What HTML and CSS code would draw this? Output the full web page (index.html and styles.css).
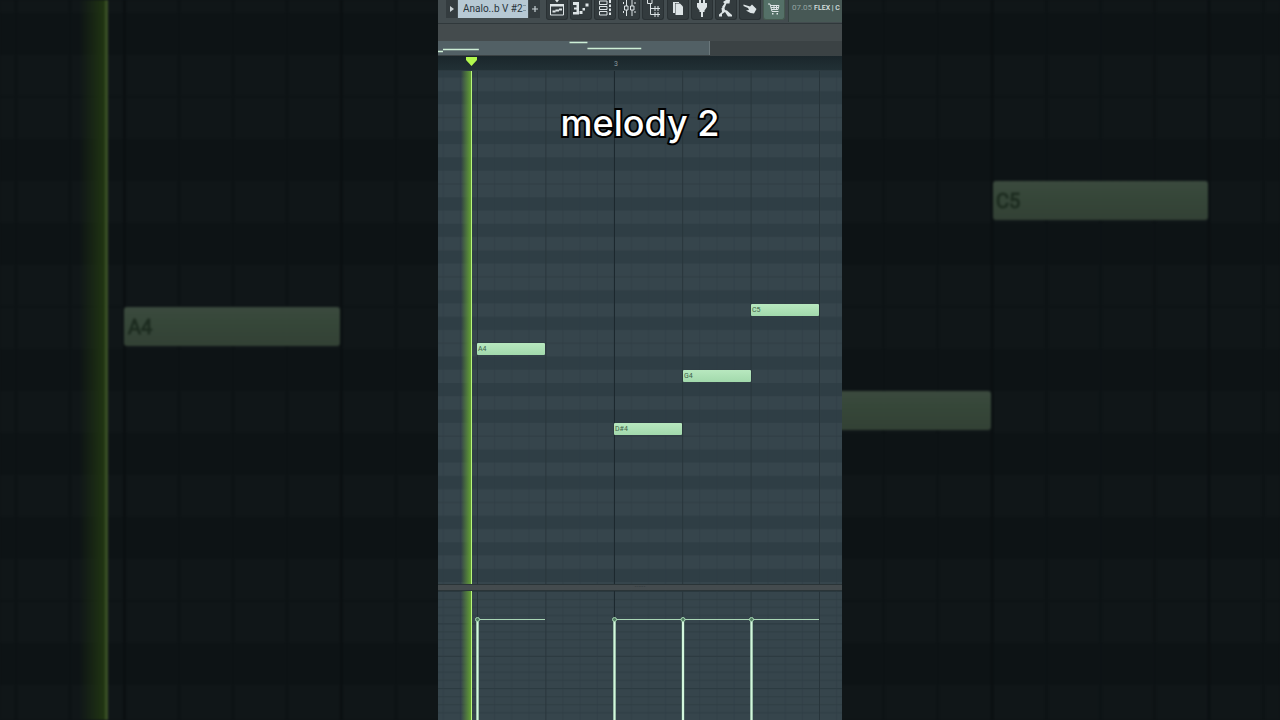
FILE: index.html
```html
<!DOCTYPE html>
<html lang="en">
<head>
    <meta charset="UTF-8">
    <meta name="viewport" content="width=device-width, initial-scale=1.0">
    <title>Piano roll</title>
    <link rel="stylesheet" href="styles.css">
</head>
<body>
    <!-- Dimmed, enlarged copy of the roll behind the video -->
    <svg class="backdrop" viewBox="0 0 1280 720" preserveAspectRatio="xMidYMid slice" aria-hidden="true">
        <defs>
            <pattern id="bg-rows" y="180.7" width="1280" height="504" patternUnits="userSpaceOnUse">
                <rect width="1280" height="504" fill="#101618"/>
                <path d="M0 63H1280M0 189H1280M0 273H1280M0 357H1280M0 483H1280" stroke="#0d1315" stroke-width="42"/>
                <path d="M0 126H1280M0 420H1280" stroke="#0d1315" stroke-width="2"/>
            </pattern>
            <pattern id="bg-cols" x="123" width="216.9" height="720" patternUnits="userSpaceOnUse">
                <path d="M1.5 0V720" stroke="#0a0f11" stroke-width="3"/>
                <path d="M56 0V720M110 0V720M164 0V720" stroke="#0c1214" stroke-width="3"/>
            </pattern>
            <linearGradient id="bg-glow">
                <stop offset="0" stop-color="#1f3312" stop-opacity="0"/>
                <stop offset="1" stop-color="#213612"/>
            </linearGradient>
            <linearGradient id="bg-note" x2="0" y2="1">
                <stop offset="0" stop-color="#3b4a3e"/>
                <stop offset="0.4" stop-color="#364739"/>
                <stop offset="1" stop-color="#334135"/>
            </linearGradient>
        </defs>
        <rect width="1280" height="720" fill="url(#bg-rows)"/>
        <rect width="1280" height="720" fill="url(#bg-cols)"/>
        <rect x="79" width="26" height="720" fill="url(#bg-glow)"/>
        <rect x="105" width="3" height="720" fill="#3a5026"/>
        <g fill="url(#bg-note)">
            <rect x="124" y="307" width="216" height="39" rx="3"/>
            <rect x="776" y="391" width="215" height="39" rx="3"/>
            <rect x="993" y="181" width="215" height="39" rx="3"/>
        </g>
        <text x="128" y="334">A4</text>
        <text x="996" y="208">C5</text>
    </svg>

    <main class="player">
        <header class="toolbar">
            <div class="pattern-picker">
                <button class="step" type="button" aria-label="Pattern menu">
                    <svg width="4" height="6" viewBox="0 0 4 6"><path d="M0 0L4 3L0 6Z"/></svg>
                </button>
                <select aria-label="Pattern">
                    <option>Analo..b V #2</option>
                </select>
                <button class="step" type="button" aria-label="Add pattern">
                    <svg width="6" height="6" viewBox="0 0 6 6"><path d="M2.4 0H3.6V2.4H6V3.6H3.6V6H2.4V3.6H0V2.4H2.4Z"/></svg>
                </button>
            </div>

            <nav class="tools">
                <button type="button" aria-label="Playlist">
                    <svg viewBox="0 0 22 20"><path class="line" d="M4.5 4.5H17.5V15H4.5Z"/><path d="M4 4H18V6.500H4ZM9 0H13L11 2.500ZM6.500 10.500H9.500V12.500H6.500ZM9.500 9.500H13V11.500H9.500ZM13 8.500H16V10.500H13Z"/></svg>
                </button>
                <button type="button" aria-label="Piano roll">
                    <svg viewBox="0 0 22 20"><path d="M3 2H9V14.500H3V12H6.500V9.500H4V7.500H6.500V5H3ZM9.500 11H12.500V14H9.500ZM12.500 8H15V10.500H12.500ZM15.500 3.500H18.500V6.500H15.500Z"/></svg>
                </button>
                <button type="button" aria-label="Channel rack">
                    <svg viewBox="0 0 22 20"><path class="line" d="M5.500 1H13V4.500H5.500ZM5.500 6.500H13V9.500H5.500ZM5.500 11.500H13V15H5.500Z"/><path d="M15 0H17V3H15ZM15 4.500H17V7H15ZM15 8.500H17V11H15ZM15 12.500H17V15H15Z"/></svg>
                </button>
                <button type="button" aria-label="Mixer">
                    <svg viewBox="0 0 22 20"><path class="line" d="M8.500 0V6M8.500 10V16M14 0V6M14 10V16M6.500 6H10V10H6.500ZM12.500 6H16V10H12.500Z"/><path d="M5 2H6V4H5ZM5 11H6V13H5ZM16.500 2H17.500V4H16.500ZM16.500 11H17.500V13H16.500Z"/></svg>
                </button>
                <button type="button" aria-label="Browser">
                    <svg viewBox="0 0 22 20"><path class="line" d="M5.500 0V3.500H10V0M8.500 4V14.500H12M8.500 8.500H12M13 6V11M13 12V17M12 8.500H18M12 14.500H18M16 6V11M16 12V17"/></svg>
                </button>
                <button type="button" aria-label="New">
                    <svg viewBox="0 0 22 20"><path d="M6 2H12V3H8V13H6Z"/><path d="M8.500 3.500H13L16 6.500V15H8.500Z"/></svg>
                </button>
                <button type="button" aria-label="Plugins">
                    <svg viewBox="0 0 22 20"><path d="M8 0H10V3H12V0H14V3H16V7L13.500 10.500V12H12V17H10V12H8.500V10.500L6 7V3H8Z"/></svg>
                </button>
                <button type="button" aria-label="Tools">
                    <svg viewBox="0 0 22 20"><path d="M8 2L11 0H15L14.500 3.500L11.500 3.500L9.500 8L8 9L7 7L9.500 3.500ZM6.500 8H9.500L10 10L12 10.500L17 15V16.500H13L10 12L7 14V16.500H4V14.500L7 12Z"/></svg>
                </button>
                <button type="button" aria-label="Touch">
                    <svg viewBox="0 0 22 20"><path d="M4.500 4.500L11 6.500L13 4.500L17.500 9L15 13.500L11.500 13L7 10.500L10 10L9 8L4.500 6Z"/></svg>
                </button>
                <button class="shop" type="button" aria-label="Shop">
                    <svg viewBox="0 0 22 20"><path class="line" d="M5 4H7L9 11.500H15.500M7.500 5.500H16L15 9.500H8.500M8 7.500H15.500M11 5V10M13.500 5V10"/><path d="M9 13H10.500V14.500H9ZM13.500 13H15V14.500H13.500Z"/></svg>
                </button>
            </nav>

            <p class="news">07.05 <b>FLEX | C</b></p>
        </header>

        <div class="spacer"></div>

        <div class="overview">
            <svg class="overview-window" viewBox="0 0 272 14">
                <path d="M0 10.500H5M5 8.500H41M132 1.500H150M150 7.500H204"/>
            </svg>
        </div>

        <div class="ruler">
            <svg class="marker" width="11" height="9" viewBox="0 0 11 9"><path d="M0 0H11V3L5.500 9L0 3Z"/></svg>
            <span class="bar-number">3</span>
        </div>

        <section class="roll">
            <svg class="grid" aria-hidden="true">
                <defs>
                    <pattern id="rows" y="232.4" width="1000" height="159.240" patternUnits="userSpaceOnUse">
                        <rect width="1000" height="160" fill="#36454c"/>
                        <path d="M0 19.900H1000M0 59.700H1000M0 86.250H1000M0 112.800H1000M0 152.600H1000" stroke="#2f3e45" stroke-width="13.270"/>
                        <path d="M0 39.800H1000M0 132.700H1000" stroke="#2f3d43"/>
                    </pattern>
                    <pattern id="cols" x="39" width="68.400" height="1000" patternUnits="userSpaceOnUse">
                        <path d="M0.500 0V1000" stroke="#28353b"/>
                        <path d="M17.600 0V1000M34.700 0V1000M51.800 0V1000" stroke="#2c3a41" stroke-opacity="0.500"/>
                    </pattern>
                </defs>
                <rect width="100%" height="100%" fill="url(#rows)"/>
                <rect width="100%" height="100%" fill="url(#cols)"/>
                <path d="M176.500 0V1000" stroke="#1c282e"/>
            </svg>
            <div class="playhead"></div>
            <div class="note a4">A4</div>
            <div class="note ds4">D#4</div>
            <div class="note g4">G4</div>
            <div class="note c5">C5</div>
            <h1 class="caption">melody 2</h1>
        </section>

        <div class="splitter"><span>······</span></div>

        <section class="velocity">
            <svg class="grid" aria-hidden="true">
                <defs>
                    <pattern id="levels" width="1000" height="32.400" patternUnits="userSpaceOnUse">
                        <path d="M0 0.500H1000" stroke="#2a383e"/>
                        <path d="M0 8.500H1000M0 16.500H1000M0 24.500H1000" stroke="#2d3b41" stroke-opacity="0.800"/>
                    </pattern>
                </defs>
                <rect width="100%" height="100%" fill="#36454c"/>
                <rect width="100%" height="100%" fill="url(#levels)"/>
                <rect width="100%" height="100%" fill="url(#cols)"/>
                <path d="M176.500 0V1000" stroke="#1c282e"/>
                <path class="level" d="M39 28.500H107M176 28.500H381"/>
                <path class="stem-edge" d="M39.500 29V1000M176.500 29V1000M245 29V1000M313.500 29V1000"/>
                <path class="stem" d="M39.500 29V1000M176.500 29V1000M245 29V1000M313.500 29V1000"/>
                <g class="handles">
                    <circle cx="39.500" cy="28.500" r="2"/>
                    <circle cx="176.500" cy="28.500" r="2"/>
                    <circle cx="245" cy="28.500" r="2"/>
                    <circle cx="313.500" cy="28.500" r="2"/>
                </g>
            </svg>
            <div class="playhead"></div>
        </section>
    </main>
</body>
</html>
```
FILE: styles.css
```css
* {
    box-sizing: border-box;
}

body {
    margin: 0;
    height: 100vh;
    display: flex;
    justify-content: center;
    overflow: hidden;
    background: #0e1416;
    font-family: Roboto, sans-serif;
}

button {
    padding: 0;
    border: none;
    display: flex;
    align-items: center;
    justify-content: center;
}

.backdrop {
    position: absolute;
    width: 100%;
    height: 100%;
    filter: blur(1px);
}

.backdrop text {
    font-size: 20px;
    fill: #1d2c20;
    stroke: #1d2c20;
}

/* Portrait video in the middle */
.player {
    position: relative;
    height: 100%;
    aspect-ratio: 101 / 180;
    display: flex;
    flex-direction: column;
    background: #36454c;
}

/* Toolbar */
.toolbar {
    height: 24px;
    display: flex;
    align-items: flex-start;
    padding-left: 8px;
    background: #434c4f;
    border-bottom: 1px solid #30383b;
}

.pattern-picker {
    display: flex;
    gap: 1px;
    height: 18px;
}

.step {
    width: 11px;
    background: #343c3f;
}

.step svg {
    fill: #c9d2d5;
}

.pattern-picker select {
    appearance: none;
    width: 70px;
    padding: 0 0 2px 5px;
    border: none;
    border-radius: 0;
    /* up / down marks at the right edge */
    background:
        linear-gradient(#8297a2, #8297a2) right 2px top 5px / 3px 1px no-repeat,
        linear-gradient(#8297a2, #8297a2) right 2px top 10px / 3px 1px no-repeat,
        #b7c9d4;
    color: #27343b;
    font-family: Roboto, sans-serif;
    font-size: 10px;
}

.tools {
    flex: 1;
    display: flex;
    justify-content: space-between;
    padding: 0 3px 0 6px;
}

.tools button {
    width: 22px;
    height: 20px;
    background: #333b3e;
    border: 1px solid #2a3134;
    border-top: none;
    border-radius: 0 0 3px 3px;
}

.tools svg {
    flex: none;
    width: 22px;
    height: 20px;
    fill: #dde4e6;
}

.tools .line {
    fill: none;
    stroke: #dde4e6;
}

.tools .shop {
    background: #547067;
    border-color: #45594f;
}

.news {
    width: 54px;
    height: 22px;
    margin: 0;
    padding: 3px 0 0 3px;
    overflow: hidden;
    white-space: nowrap;
    background: #475855;
    border-left: 1px solid #354240;
    font-size: 8px;
    line-height: 10px;
    color: #93a3a1;
}

.news b {
    font-size: 7px;
    font-weight: 500;
    color: #dbe3e2;
}

.spacer {
    height: 17px;
    background: #444b4d;
}

.overview {
    height: 15px;
    background: #3b4244;
}

.overview-window {
    display: block;
    width: 272px;
    height: 14px;
    background: #526065;
    border-right: 1px solid #6a777b;
}

.overview-window path {
    stroke: #cdeed6;
    stroke-width: 1.5;
}

.ruler {
    position: relative;
    height: 15px;
    background: linear-gradient(#1a262b, #213035);
    border-bottom: 1px solid #2c3a40;
}

.marker {
    position: absolute;
    left: 28px;
    top: 1px;
    fill: #b2f84e;
}

.bar-number {
    position: absolute;
    left: 176px;
    top: 4px;
    font-size: 7px;
    line-height: 8px;
    color: #8b989c;
}

/* Note grid */
.roll {
    position: relative;
    flex: 1;
    overflow: hidden;
}

.grid {
    display: block;
    width: 100%;
    height: 100%;
}

.playhead {
    position: absolute;
    top: 0;
    bottom: 0;
    left: 23px;
    width: 11px;
    background: linear-gradient(to right, rgba(100, 160, 53, 0), #64a035);
    border-right: 1px solid #b9f57c;
}

.note {
    position: absolute;
    width: 68px;
    height: 12px;
    padding-left: 1px;
    border-radius: 1px;
    background: linear-gradient(#b8e8bf, #a2d9ac);
    box-shadow: 0 0 1px #1f2c30;
    font-size: 7px;
    line-height: 12px;
    color: #3d6047;
}

.a4 {
    left: 39px;
    top: 272px;
}

.ds4 {
    left: 176px;
    top: 352px;
}

.g4 {
    left: 245px;
    top: 299px;
}

.c5 {
    left: 313px;
    top: 233px;
}

.caption {
    position: absolute;
    left: 0;
    right: 0;
    top: 31px;
    margin: 0;
    font-family: Inter, sans-serif;
    font-size: 36px;
    font-weight: 500;
    line-height: 42px;
    text-align: center;
    color: #fff;
    -webkit-text-stroke: 4px #000;
    paint-order: stroke fill;
}

.splitter {
    height: 7px;
    background: #444b4e;
    border-top: 1px solid #2a3437;
    border-bottom: 1px solid #2a3437;
    font-size: 7px;
    line-height: 5px;
    text-align: center;
    color: #2c3538;
}

/* Velocity lane */
.velocity {
    position: relative;
    height: 129px;
}

.level {
    stroke: #a9d6b5;
}

.stem-edge {
    stroke: #5e8271;
    stroke-width: 3;
}

.stem {
    stroke: #d3f7dd;
    stroke-width: 2;
}

.handles {
    fill: #4f7a60;
    stroke: #a5d5b1;
}
```
